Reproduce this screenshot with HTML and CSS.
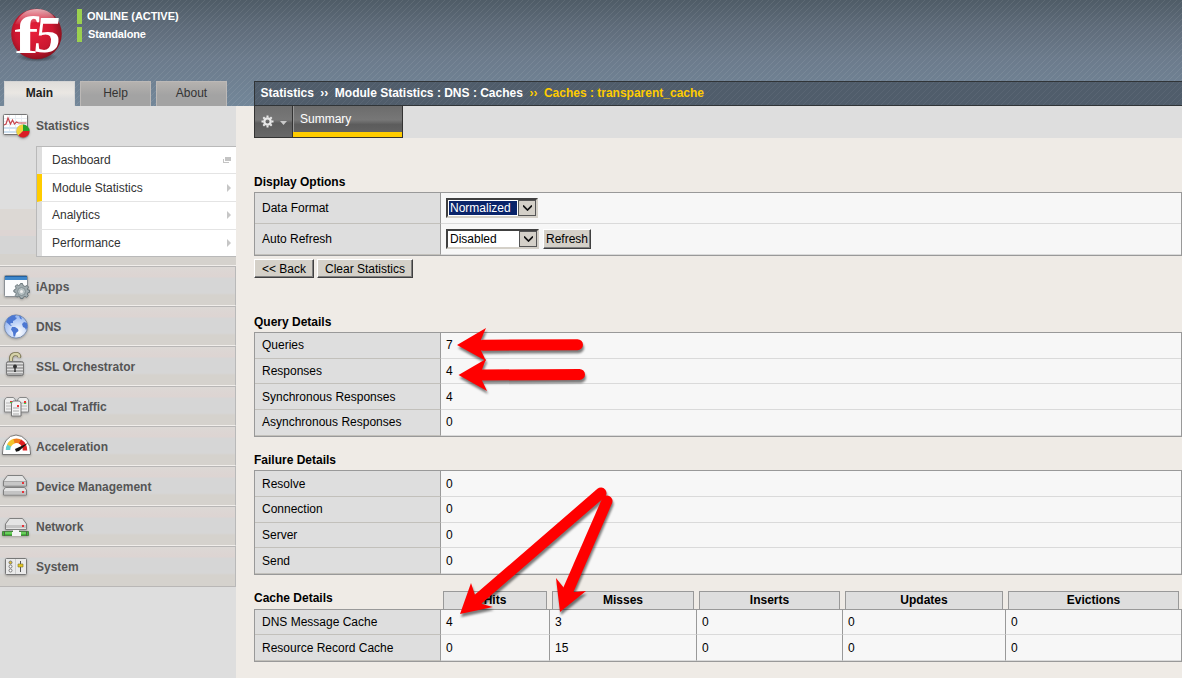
FILE: index.html
```html
<!DOCTYPE html>
<html lang="en">
<head>
<meta charset="utf-8">
<title>Caches : transparent_cache</title>
<link rel="stylesheet" href="styles.css">
</head>
<body>
<header class="header">
  <div class="brand-col">
    <div class="brand">
      <svg class="logo" width="64" height="66" viewBox="0 0 64 66">
        <defs>
          <radialGradient id="ball" cx="45%" cy="45%" r="58%"><stop offset="0" stop-color="#e8203a"/><stop offset=".65" stop-color="#cb1730"/><stop offset="1" stop-color="#86101c"/></radialGradient>
          <linearGradient id="shine" x1="0" y1="0" x2="0" y2="1"><stop offset="0" stop-color="#fff" stop-opacity=".65"/><stop offset="1" stop-color="#fff" stop-opacity=".05"/></linearGradient>
          <radialGradient id="shade"><stop offset="0" stop-color="#20262c" stop-opacity=".9"/><stop offset="1" stop-color="#20262c" stop-opacity="0"/></radialGradient>
        </defs>
        <ellipse cx="37" cy="57" rx="21" ry="5" fill="url(#shade)"/>
        <circle cx="36.500" cy="34" r="25.300" fill="url(#ball)"/>
        <path d="M15 24Q22 9 37 9t21 15Q47 19 35 22T15 24z" fill="url(#shine)"/>
        <text class="logo-f" x="14.500" y="52.500" textLength="24" lengthAdjust="spacingAndGlyphs">f</text>
        <text class="logo-5" transform="translate(33 52) skewX(-7)" x="0" y="0" textLength="26" lengthAdjust="spacingAndGlyphs">5</text>
      </svg>
      <div class="status">
        <div class="status-line">ONLINE (ACTIVE)</div>
        <div class="status-line standalone">Standalone</div>
      </div>
    </div>
    <nav class="tabs"><a class="tab active">Main</a><a class="tab">Help</a><a class="tab">About</a></nav>
  </div>
  <div class="crumbs"><span>Statistics</span><span class="sep">››</span><span>Module Statistics : DNS : Caches</span><span class="sep current">››</span><span class="current">Caches : transparent_cache</span></div>
</header>
<div class="body">
  <aside class="sidebar">
    <section class="stats">
      <div class="stats-head">
        <svg width="36" height="40" viewBox="0 0 36 40" class="icon">
          <rect x="3.500" y="8.500" width="24" height="20" rx="1" fill="#fff" stroke="#777"/>
          <path d="M4 12.500h23M4 15.500h23M4 18.500h23M9.500 9v18M15.500 9v18M21.500 9v18" stroke="#e9edf2" fill="none"/>
          <path d="M4 21h23v2H4zM4 25h23v2H4z" fill="#cfe1f1"/>
          <path d="M4 19l2-1 2-6 2.500 6 2-4 2 4 2-2 2 1h8" fill="none" stroke="#c8444c" stroke-width="1.200"/>
          <circle cx="23" cy="25.500" r="7" fill="#666" opacity=".4"/>
          <path d="M23 25V18.500A6.500 6.500 0 0 0 18.400 29.600z" fill="#f2d43b"/><path d="M23 25V18.500A6.500 6.500 0 0 1 29.500 25z" fill="#26a22b"/><path d="M23 25h6.500A6.500 6.500 0 0 1 18.400 29.600z" fill="#da1d25"/>
        </svg>
        <span>Statistics</span>
      </div>
      <div class="submenu">
        <a class="sub">Dashboard<svg width="9" height="7"><path d="M2 0h6v4H2zM0 2h1v3h5v1H0z" fill="#c4c4c4"/></svg></a>
        <a class="sub selected">Module Statistics<svg width="9" height="8"><path d="M4 0l4 4-4 4z" fill="#c6c6c6"/></svg></a>
        <a class="sub raised">Analytics<svg width="9" height="8"><path d="M4 0l4 4-4 4z" fill="#c6c6c6"/></svg></a>
        <a class="sub">Performance<svg width="9" height="8"><path d="M4 0l4 4-4 4z" fill="#c6c6c6"/></svg></a>
      </div>
    </section>
    <a class="item"><svg class="icon" width="36" height="40" viewBox="0 0 36 40">
      <rect x="4.500" y="9.500" width="23" height="21" rx="1" fill="#fbfcfd" stroke="#8b9095"/><path d="M5 10h22v4H5z" fill="#3e86ca"/><path d="M5 10h22v1H5z" fill="#235f9f"/>
      <path d="M20.500 17.500h2l.5 2 2 1 2-1 1.500 1.500-1 2 .5 1h1.500v2.500H28l-.7 1.500 1 1.800-1.600 1.500-1.800-1-1.500.7-.4 1.500h-2.500l-.5-1.600-1.500-.7-1.600 1-1.600-1.600.9-1.700-.6-1.500-1.700-.4v-2l1.700-.6.5-1.400-.8-1.800 1.600-1.600 1.600.9 1.500-.7z" fill="#a1acb0" stroke="#6d797d"/><circle cx="21.500" cy="25.500" r="4" fill="#b7c1c3" stroke="#839094"/><circle cx="21.500" cy="25.500" r="1.500" fill="#eee"/>
    </svg><span>iApps</span></a>
    <a class="item"><svg class="icon" width="36" height="40" viewBox="0 0 36 40">
      <defs><radialGradient id="globe" cx="60%" cy="75%" r="80%"><stop offset="0" stop-color="#fff"/><stop offset="1" stop-color="#8aaef0"/></radialGradient></defs>
      <circle cx="16" cy="20.500" r="11.600" fill="url(#globe)" stroke="#7b8dab"/>
      <path d="M6 16l2-4 4-2.500 4-.5-1 2 2 1-2 2-2 1 0 2-2 0-1 1 2 2-2-.5-2-2zM12 21l3 0 3 2 .5 2-2.500 2-1 3.500-1.500 0-.5-4-2-3zM19 9.500l2 1 1 3-2-1zM22 18l2-2 3 1 .5 4-1.500 3-1-2-2-1z" fill="#4c77d2"/>
    </svg><span>DNS</span></a>
    <a class="item"><svg class="icon" width="36" height="40" viewBox="0 0 36 40">
      <path d="M11 17v-4q0-5 4.500-5T19 11.500" fill="none" stroke="#77724f" stroke-width="4"/><path d="M11 17v-4q0-5 4.500-5T19 11.500" fill="none" stroke="#d6d2a9" stroke-width="2.400"/>
      <rect x="6.500" y="15.500" width="17" height="14" rx="2" fill="#aaa" stroke="#777"/><path d="M7 17.500h16M7 20.500h16M7 23.500h16M7 26.500h16" stroke="#dedede"/><circle cx="15" cy="20.500" r="2" fill="#333"/><path d="M14.500 20h1l.4 6h-1.800z" fill="#333"/>
    </svg><span>SSL Orchestrator</span></a>
    <a class="item"><svg class="icon" width="36" height="40" viewBox="0 0 36 40">
      <path d="M4.500 14l2-2.500h7l2 2.500v12h-11z" fill="#eee" stroke="#888"/><path d="M17.500 14l2-2.500h7l2 2.500v12h-11z" fill="#eee" stroke="#888"/><path d="M6 17h6M6 20h6M6 23h6M21 17h6M21 20h6M21 23h6" stroke="#b8b8b8"/>
      <path d="M11.500 17l1.500-2h6.500l1.500 2v13h-9.500z" fill="#f4f4f4" stroke="#777"/><path d="M13 22h6M13 25h6M13 28h6" stroke="#aaa"/><path d="M10 15h2v1h-2zM17 19h2v2h-2zM24 15h2v2h-2z" fill="#e33"/><path d="M10 16h2v1h-2zM24 17h2v1h-2z" fill="#4c4"/>
    </svg><span>Local Traffic</span></a>
    <a class="item"><svg class="icon" width="36" height="40" viewBox="0 0 36 40">
      <path d="M2.500 27Q2 20 6 14.500T16 9t10.500 5.500T30.500 27v1.500h-28z" fill="#fff" stroke="#777"/>
      <g fill="none" stroke-width="4.500"><path d="M8 24q0-3 1.500-5" stroke="#5fd0d0"/><path d="M9 19.500q2-3.500 5.500-4.500" stroke="#f2c52d"/><path d="M14 15.100q4-1 7 1" stroke="#f07a1a"/><path d="M20 15.500q5 3 5 9" stroke="#de1d22"/></g>
      <path d="M15 23l13-6-9 8-3 .7z" fill="#111"/>
    </svg><span>Acceleration</span></a>
    <a class="item"><svg class="icon" width="36" height="40" viewBox="0 0 36 40">
      <path d="M3.500 15l4-5.500h15l4 5.500v5h-23z" fill="#e4e4e4" stroke="#808080"/><path d="M4 15.500h22" stroke="#aaa"/><path d="M4 16h22v3H4z" fill="#c7c7c7"/>
      <path d="M3.500 24l2-2.500h19l2 2.500v5h-23z" fill="#e4e4e4" stroke="#808080"/><path d="M4 25h22v3H4z" fill="#c4c4c4"/><path d="M22 16h2v2h-2zM22 25h2v2h-2z" fill="#e5333a"/>
    </svg><span>Device Management</span></a>
    <a class="item"><svg class="icon" width="36" height="40" viewBox="0 0 36 40">
      <path d="M5.500 18l4-5.500h13l4 5.500v5.500h-21z" fill="#e4e4e4" stroke="#808080"/><path d="M6 19h20v3H6z" fill="#c5c5c5"/><path d="M22 19h2v2h-2z" fill="#e5333a"/>
      <path d="M2.500 25.500h26v4h-26z" fill="#42b637" stroke="#47853f"/><path d="M4 27h23" stroke="#92e582"/><path d="M13 24h6v2h2v4h-9v-4h1z" fill="#f3f3f3"/><path d="M4.500 25v5M26.500 25v5" stroke="#4c6548"/>
    </svg><span>Network</span></a>
    <a class="item"><svg class="icon" width="36" height="40" viewBox="0 0 36 40">
      <rect x="5.500" y="12.500" width="21" height="16" rx="1" fill="#eaeaea" stroke="#777"/><path d="M15.500 13v15" stroke="#ccc"/>
      <g fill="#fff" stroke="#777"><circle cx="10.500" cy="16.500" r="1.500" fill="#e4c229"/><circle cx="10.500" cy="20.500" r="1.500"/><circle cx="10.500" cy="24.500" r="1.500"/></g>
      <path d="M20.500 15v11" stroke="#555"/><path d="M18 18h5v3h-5z" fill="#e7c81e" stroke="#76702e" stroke-width=".6"/>
    </svg><span>System</span></a>
  </aside>
  <main class="main">
    <div class="toolbar">
      <div class="gear"><svg width="38" height="31" viewBox="0 0 38 31">
        <g fill="none" stroke="#e8e8e8"><circle cx="12.500" cy="15.500" r="3.200" stroke-width="2.300"/><path d="M12.500 9.500v2M12.500 19.500v2M6.500 15.500h2M16.500 15.500h2M8.300 11.300l1.400 1.400M15.300 18.300l1.400 1.400M8.300 19.700l1.400-1.400M15.300 12.700l1.400-1.400" stroke-width="2"/></g><path d="M25 15h7l-3.500 4z" fill="#c9c9c9"/></svg></div>
      <div class="summary">Summary</div>
    </div>
    <h2 class="title first">Display Options</h2>
    <div class="table options">
      <div class="label">Data Format</div><div class="cell"><div class="select normalized"><span class="value">Normalized</span><span class="drop"><svg width="9" height="6"><path d="M0 .5l4.500 4.500 4.500-4.500" fill="none" stroke="#111" stroke-width="1.700"/></svg></span></div></div>
      <div class="label">Auto Refresh</div><div class="cell"><div class="select disabled"><span class="value">Disabled</span><span class="drop"><svg width="9" height="6"><path d="M0 .5l4.500 4.500 4.500-4.500" fill="none" stroke="#111" stroke-width="1.700"/></svg></span></div><div class="button refresh">Refresh</div></div>
    </div>
    <div class="actions"><div class="button back">&lt;&lt; Back</div><div class="button clear">Clear Statistics</div></div>
    <h2 class="title">Query Details</h2>
    <div class="table query">
      <div class="label raised">Queries</div><div class="cell raised">7</div>
      <div class="label">Responses</div><div class="cell">4</div>
      <div class="label">Synchronous Responses</div><div class="cell">4</div>
      <div class="label raised">Asynchronous Responses</div><div class="cell raised">0</div>
    </div>
    <h2 class="title">Failure Details</h2>
    <div class="table failure">
      <div class="label">Resolve</div><div class="cell">0</div>
      <div class="label raised">Connection</div><div class="cell raised">0</div>
      <div class="label">Server</div><div class="cell">0</div>
      <div class="label">Send</div><div class="cell">0</div>
    </div>
    <div class="cache-head"><h2 class="title">Cache Details</h2><div class="col">Hits</div><div class="col">Misses</div><div class="col">Inserts</div><div class="col">Updates</div><div class="col">Evictions</div></div>
    <div class="table cache">
      <div class="label">DNS Message Cache</div><div class="cell">4</div><div class="cell">3</div><div class="cell">0</div><div class="cell">0</div><div class="cell">0</div>
      <div class="label">Resource Record Cache</div><div class="cell">0</div><div class="cell">15</div><div class="cell">0</div><div class="cell">0</div><div class="cell">0</div>
    </div>
  </main>
</div>
<svg class="arrows" width="1182" height="678" viewBox="0 0 1182 678">
  <g class="arrow"><path d="M483 345.200L577.500 344.700"/><polygon points="457,345 486,328 481,339.500 481,350.500 486,361"/></g>
  <g class="arrow"><path d="M483 375L579.500 374.500"/><polygon points="458.500,375 486,359 482,369.500 482,380.500 487,391"/></g>
  <g class="arrow"><path d="M476 601L601 493"/><polygon points="460,614 471,583 475,595 482,604 493,607"/></g>
  <g class="arrow"><path d="M567 593L607 501"/><polygon points="560,612 556,578 564,588 574,592 586,591"/></g>
</svg>
</body>
</html>
```
FILE: styles.css
```css
* { box-sizing: border-box; }
body { margin: 0; width: 1182px; height: 678px; overflow: hidden; position: relative; background: #efebe6; color: #000; font: 12px/14px "Liberation Sans", Arial, sans-serif; }
h2 { margin: 0; font-size: 12px; line-height: 14px; }
.header { height: 106px; display: grid; grid-template-columns: 254px 1fr; align-items: end; background: repeating-linear-gradient(135deg, rgba(255,255,255,.08) 0 1px, transparent 1px 4.243px), linear-gradient(#4f5c67, #5f6c7a 25%, #6c7b8c 55%, #738799 100%); }
.brand-col { height: 106px; display: flex; flex-direction: column; }
.brand { height: 81px; display: flex; }
.logo { width: 64px; flex: none; }
.logo-f, .logo-5 { font-family: "Liberation Serif", serif; font-weight: bold; fill: #fff; }
.logo-f { font-size: 52px; }
.logo-5 { font-size: 52px; }
.status { padding: 9px 0 0 13px; display: flex; flex-direction: column; gap: 3px; }
.status-line { height: 15px; border-left: 5px solid #9bd04f; padding-left: 5px; color: #fff; font-size: 11px; line-height: 15px; font-weight: bold; letter-spacing: -.05px; }
.standalone { padding-left: 6px; letter-spacing: -.15px; }
.tabs { display: flex; gap: 5px; padding-left: 4px; }
.tab { width: 71px; height: 25px; border: 1px solid #bcb9b7; border-bottom: 0; background: linear-gradient(#b5b2af, #a3a3a3 55%); color: #333; text-align: center; line-height: 23px; }
.tab.active { background: linear-gradient(#dfddda, #eae7e3 45%, #dedede 70%); border-color: #d4d4d4; color: #222; font-weight: bold; }
.crumbs { height: 25px; border: 1px solid #303437; border-right: 0; padding-left: 5.500px; display: flex; background: repeating-linear-gradient(135deg, rgba(255,255,255,.05) 0 1px, transparent 1px 4.243px), #505d6b; color: #fff; font-weight: bold; line-height: 23px; }
.sep { width: 21px; text-align: center; }
.current { color: #ffcc00; }
.body { display: grid; grid-template-columns: 236px 1fr; height: 572px; }
.sidebar { background: #dedede; color: #555; font-weight: bold; }
.stats { height: 160px; background: linear-gradient(#dedede 0 103px, #dcd8d4 103px 124px, #ddd5d3 124px 130px, #d5d5d5 130px 148px, #d5d2cd 148px); border-bottom: 1px solid #f1eeeb; }
.stats-head { height: 40px; display: flex; align-items: center; }
.icon { flex: none; width: 36px; height: 40px; filter: drop-shadow(0 1px 1px rgba(0,0,0,.25)); }
.submenu { margin-left: 36px; height: 111px; border: 1px solid #b9b9b9; border-right: 0; display: grid; grid-template-rows: 27px 28px 28px 26px; color: #333; font-weight: normal; }
.sub { display: flex; align-items: center; justify-content: space-between; background: #fff; border-left: 5px solid #dedede; border-bottom: 1px solid #e4e4e4; padding: 0 4px 0 10px; }
.sub:last-child { border-bottom: 0; }
.sub.selected { border-left-color: #ffcc00; }
.item { display: flex; height: 40px; align-items: center; border-top: 1px solid #b9b7b6; border-right: 1px solid #b9b9b9; border-bottom: 1px solid #f1eeeb; background: linear-gradient(#dcd8d5 0, #ddd4d2 10px, #d6d6d6 11px 26px, #d5d2cd 28px); padding-bottom: 1px; }
.item span { padding-top: 2px; }
.item:last-child { height: 41px; border-bottom-color: #b9b7b6; }
.main { padding-left: 18px; min-width: 0; }
.toolbar { height: 32px; display: flex; background: #dedede; }
.gear { width: 39px; border: 1px solid #333; border-top: 0; background: linear-gradient(#6f6f6f, #777 45%, #5d5d5d 55%, #686868); }
.summary { width: 110px; border-right: 1px solid #333; border-bottom: 1px solid #333; box-shadow: inset 0 -5px #ffcc00, inset 1px 0 #999; background: linear-gradient(#6c6c6c, #777 45%, #5c5c5c 60%, #666); color: #fff; padding: 6px 0 0 7px; }
.title.first { margin-top: 37px; }
.table { display: grid; grid-template-columns: 186px 1fr; border: 1px solid #999; margin-top: 3px; background: #f7f7f7; }
.label, .cell { border-bottom: 1px solid #dadada; display: flex; align-items: center; }
.label { background: #dedede; border-right: 1px solid #999; border-bottom-color: #c2c0bb; padding-left: 7px; }
.cell { padding-left: 5px; }
.raised { padding-bottom: 2px; }
.options { grid-template-rows: 31px 31px; }
.options .cell { gap: 4px; }
.select { display: flex; height: 20px; background: #fff; border: 2px solid; border-color: #404040 #d4d0c8 #d4d0c8 #404040; }
.select .value { flex: 1; margin: 1px; padding-left: 1px; line-height: 14px; }
.normalized { width: 92px; }
.normalized .value { background: #0a246a; color: #fff; }
.disabled { width: 93px; }
.drop { width: 18px; background: #d4d0c8; border: 1px solid #555; display: grid; place-items: center; }
.button { height: 20px; background: #d4d0c8; border: 1px solid; border-color: #fff #404040 #404040 #fff; box-shadow: inset -1px -1px #808080; text-align: center; line-height: 18px; }
.refresh { width: 48px; }
.actions { display: flex; gap: 3px; padding-top: 3px; height: 59px; }
.actions .button { height: 19px; }
.back { width: 60px; }
.clear { width: 96px; }
.query { grid-template-rows: 26px 25px 26px 26px; }
.failure { grid-template-rows: 26px 26px 25px 26px; }
.query + .title { margin-top: 16px; }
.cache-head { margin-top: 16px; display: grid; height: 18px; grid-template-columns: 184px 104px 142px 141px 158px 171px; column-gap: 5px; }
.cache-head .title { margin-top: 0; }
.col { border: 1px solid #999; border-bottom: 0; background: #dedede; text-align: center; font-weight: bold; line-height: 17px; }
.cache { margin-top: 0; grid-template-columns: 186px 109px 147px 146px 163px 1fr; grid-template-rows: 25px 26px; }
.cache .cell { border-right: 1px solid #999; }
.cache .cell:nth-child(6n) { border-right: 0; }
.arrows { position: absolute; left: 0; top: 0; pointer-events: none; }
.arrow { fill: #f00; filter: drop-shadow(1px 3px 1px rgba(0,0,0,.5)); }
.arrow path { stroke: #f00; stroke-width: 11px; stroke-linecap: round; }
```
